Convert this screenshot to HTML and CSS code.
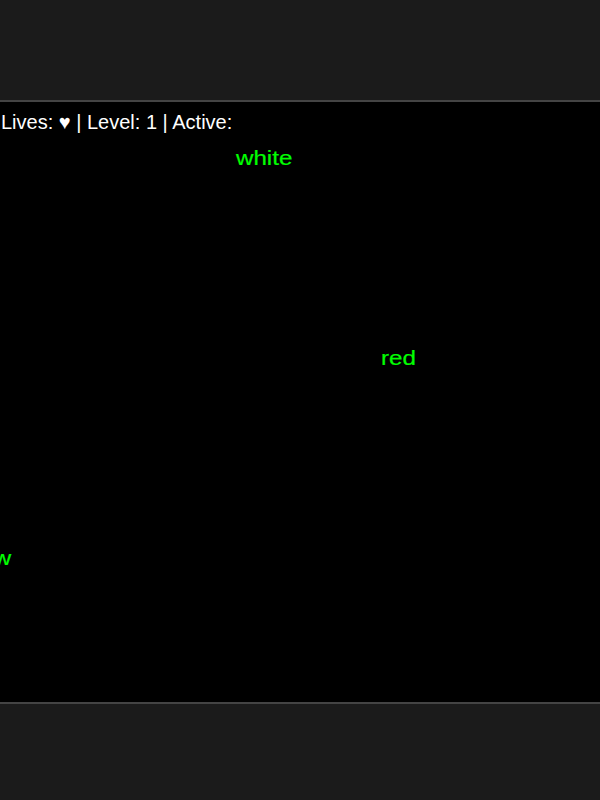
FILE: index.html
```html
<!DOCTYPE html>
<html>
<head>
<meta charset="utf-8">
<link rel="stylesheet" href="styles.css">
</head>
<body>
<div class="stage">
  <div class="game">
    <div class="hud">Lives: ♥ | Level: 1 | Active:</div>
    <div class="word" style="left:236px; top:44px">white</div>
    <div class="word" style="left:381px; top:244px">red</div>
    <div class="word" style="left:-56px; top:444px">yellow</div>
  </div>
</div>
</body>
</html>
```
FILE: styles.css
```css
html, body {
  margin: 0;
  padding: 0;
  background: #1b1b1b;
  overflow: hidden;
}
.stage {
  padding-top: 100px;
  width: 600px;
  height: 700px;
  overflow: hidden;
}
.game {
  position: relative;
  width: 600px;
  height: 600px;
  background: #000;
  border-top: 2px solid #444;
  border-bottom: 2px solid #444;
  overflow: hidden;
  font-family: "Liberation Sans", Arial, sans-serif;
}
.hud {
  color: #fff;
  font-size: 20px;
  padding: 8px 0 0 1px;
  line-height: 24px;
  white-space: nowrap;
}
.word {
  position: absolute;
  color: #00ff00;
  font-size: 21px;
  line-height: 24px;
  white-space: nowrap;
  transform: scaleX(1.15);
  transform-origin: 0 0;
  -webkit-text-stroke: 0.2px #00ff00;
}
```
